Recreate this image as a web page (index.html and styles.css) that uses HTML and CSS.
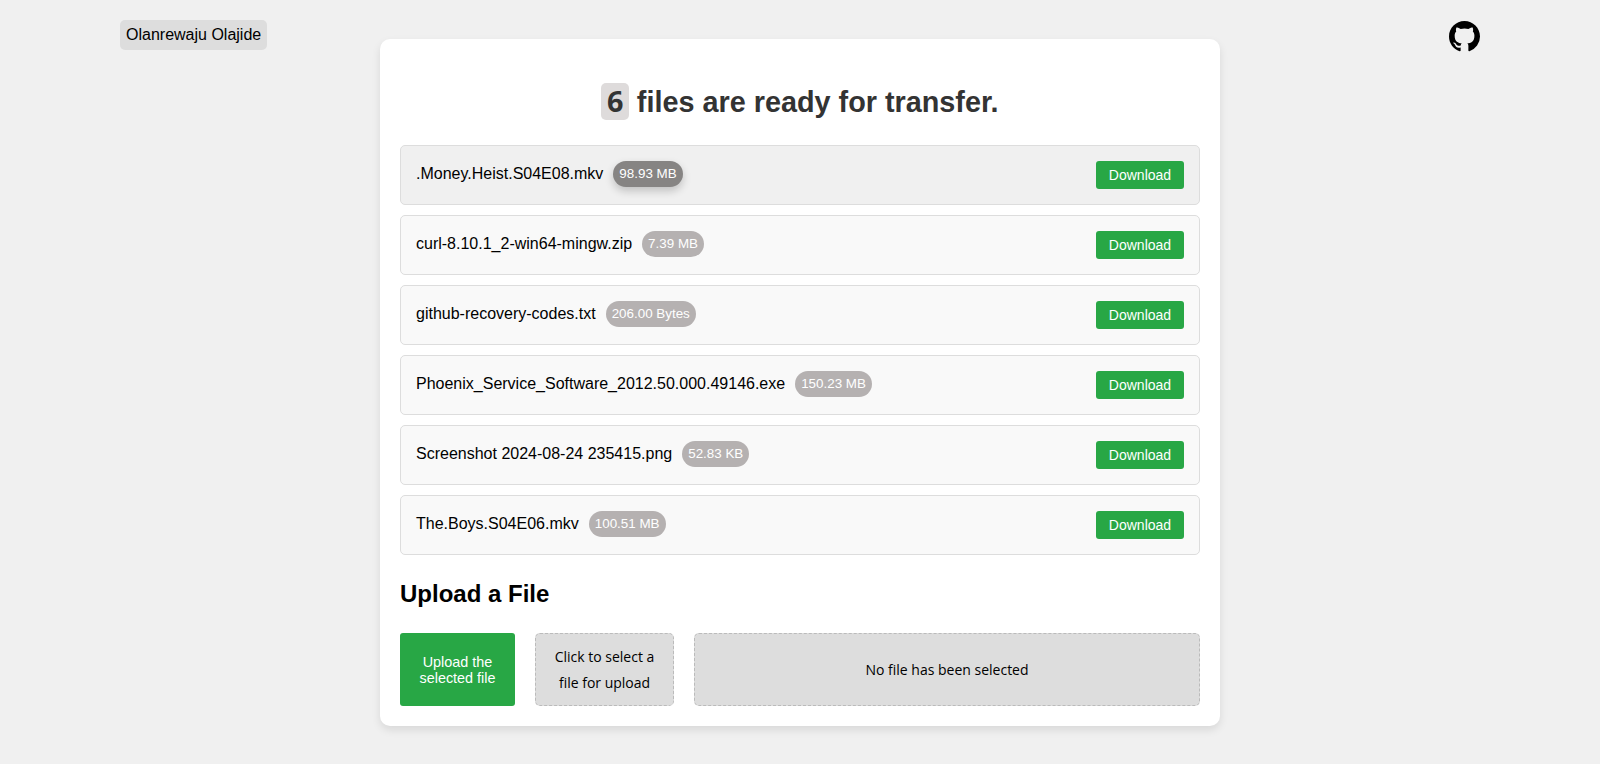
FILE: index.html
```html
<!DOCTYPE html>
<html lang="en">
<head>
<meta charset="utf-8">
<title>File transfer</title>
<link rel="stylesheet" href="styles.css">
</head>
<body>
<div class="page">
  <div class="side side-left"><a class="owner">Olanrewaju Olajide</a></div>
  <main class="card">
    <h1 class="title"><span class="count">6</span> files are ready for transfer.</h1>
    <ul class="files">
      <li class="file file-hover"><div class="file-info"><span class="file-name">.Money.Heist.S04E08.mkv</span><span class="size size-hover">98.93 MB</span></div><a class="download">Download</a></li>
      <li class="file"><div class="file-info"><span class="file-name">curl-8.10.1_2-win64-mingw.zip</span><span class="size">7.39 MB</span></div><a class="download">Download</a></li>
      <li class="file"><div class="file-info"><span class="file-name">github-recovery-codes.txt</span><span class="size">206.00 Bytes</span></div><a class="download">Download</a></li>
      <li class="file"><div class="file-info"><span class="file-name">Phoenix_Service_Software_2012.50.000.49146.exe</span><span class="size">150.23 MB</span></div><a class="download">Download</a></li>
      <li class="file"><div class="file-info"><span class="file-name">Screenshot 2024-08-24 235415.png</span><span class="size">52.83 KB</span></div><a class="download">Download</a></li>
      <li class="file"><div class="file-info"><span class="file-name">The.Boys.S04E06.mkv</span><span class="size">100.51 MB</span></div><a class="download">Download</a></li>
    </ul>
    <h2 class="upload-title">Upload a File</h2>
    <form class="upload">
      <button class="upload-btn" type="button">Upload the selected file</button>
      <label class="pick">Click to select a file for upload</label>
      <div class="selected">No file has been selected</div>
    </form>
  </main>
  <div class="side side-right">
    <svg class="github" viewBox="0 0 16 16" aria-label="GitHub"><path fill="#000" d="M8 0C3.58 0 0 3.58 0 8c0 3.54 2.29 6.53 5.47 7.59.4.07.55-.17.55-.38 0-.19-.01-.82-.01-1.49-2.01.37-2.53-.49-2.69-.94-.09-.23-.48-.94-.82-1.13-.28-.15-.68-.52-.01-.53.63-.01 1.08.58 1.23.82.72 1.21 1.87.87 2.33.66.07-.52.28-.87.51-1.07-1.78-.2-3.64-.89-3.64-3.95 0-.87.31-1.59.82-2.15-.08-.2-.36-1.02.08-2.12 0 0 .67-.21 2.2.82.64-.18 1.32-.27 2-.27s1.36.09 2 .27c1.53-1.04 2.2-.82 2.2-.82.44 1.1.16 1.92.08 2.12.51.56.82 1.27.82 2.15 0 3.07-1.87 3.75-3.65 3.95.29.25.54.73.54 1.48 0 1.07-.01 1.93-.01 2.2 0 .21.15.46.55.38A8.01 8.01 0 0 0 16 8c0-4.42-3.58-8-8-8z"/></svg>
  </div>
</div>
</body>
</html>
```

FILE: styles.css
```css
* { box-sizing: border-box; }
html, body { margin: 0; padding: 0; }
body {
  background: #f0f0f0;
  color: #000;
  font-family: "Liberation Sans", Arial, sans-serif;
  font-size: 16px;
}
.page {
  display: grid;
  grid-template-columns: 1fr 840px 1fr;
  padding: 20px 120px 38px;
  min-height: 764px;
  align-items: start;
}
.side { display: flex; }
.side-right { justify-content: flex-end; }
.owner {
  background: #dddddd;
  border-radius: 5px;
  padding: 0 6px;
  line-height: 30px;
  height: 30px;
  white-space: nowrap;
}
.github { width: 31px; height: 31px; display: block; margin-top: 1px; }
.card {
  background: #fff;
  border-radius: 10px;
  box-shadow: 0 4px 8px rgba(0, 0, 0, 0.1);
  padding: 44px 20px 20px;
  margin-top: 19px;
}
.title {
  margin: 0 0 24px;
  height: 38px;
  text-align: center;
  font-size: 28.8px;
  font-weight: 700;
  line-height: 37px;
  color: #333;
}
.count {
  display: inline-block;
  background: #dedbdb;
  border-radius: 5px;
  padding: 1px 5.5px 3px;
  line-height: 33px;
  font-family: "Open Sans", sans-serif;
}
.files {
  list-style: none;
  margin: 0;
  padding: 0;
  display: flex;
  flex-direction: column;
  gap: 10px;
}
.file {
  display: flex;
  align-items: center;
  justify-content: space-between;
  height: 60px;
  background: #f9f9f9;
  border: 1px solid #ddd;
  border-radius: 5px;
  padding: 0 15px;
}
.file-hover { background: #f0f0f0; }
.file-info { display: flex; align-items: center; gap: 10px; padding-bottom: 2px; }
.size {
  background: #b5b1b1;
  color: #fff;
  border-radius: 13px;
  font-size: 13.4px;
  line-height: 26px;
  padding: 0 6px;
  white-space: nowrap;
}
.size-hover {
  background: #868483;
  box-shadow: 0 4px 8px rgba(0, 0, 0, 0.2);
}
.download {
  background: #28a745;
  color: #fff;
  border-radius: 3px;
  font-size: 14px;
  line-height: 28px;
  height: 28px;
  width: 88px;
  text-align: center;
}
.upload-title {
  margin: 25px 0 25px;
  font-size: 24px;
  line-height: 28px;
  font-weight: 700;
}
.upload {
  display: flex;
  gap: 20px;
  height: 73px;
}
.upload-btn {
  width: 115px;
  background: #28a745;
  color: #fff;
  border: 0;
  border-radius: 3px;
  font-family: "Liberation Sans", Arial, sans-serif;
  font-size: 14.4px;
  line-height: 16px;
  padding: 0 10px;
}
.pick, .selected {
  background: #dddddd;
  border: 1px dashed #bbb;
  border-radius: 5px;
  display: flex;
  align-items: center;
  justify-content: center;
  text-align: center;
  font-family: "Open Sans", sans-serif;
  font-size: 14px;
}
.pick { width: 139px; line-height: 26px; padding: 0 10px; }
.selected { flex: 1; }
```
